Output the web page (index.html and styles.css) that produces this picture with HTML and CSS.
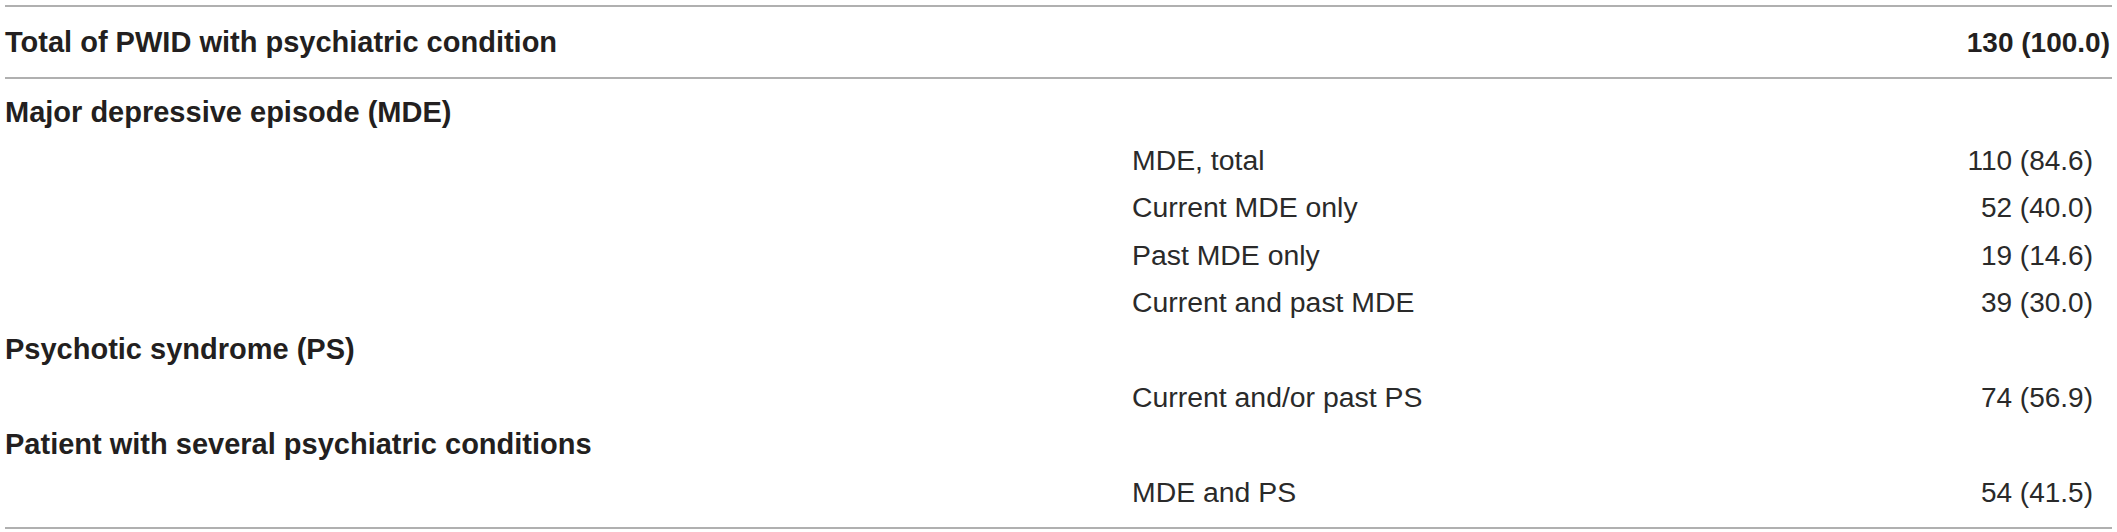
FILE: index.html
```html
<!DOCTYPE html>
<html lang="en">
<head>
<meta charset="utf-8">
<title>PWID with psychiatric condition</title>
<link rel="stylesheet" href="styles.css">
</head>
<body>
<table class="tbl">
  <colgroup>
    <col class="c-label">
    <col class="c-sub">
    <col class="c-num">
  </colgroup>
  <thead>
    <tr class="hdr">
      <th class="lbl" colspan="2">Total of PWID with psychiatric condition</th>
      <th class="num">130 (100.0)</th>
    </tr>
  </thead>
  <tbody>
    <tr class="first">
      <td class="sec">Major depressive episode (MDE)</td><td></td><td></td>
    </tr>
    <tr><td></td><td class="sub">MDE, total</td><td class="val">110 (84.6)</td></tr>
    <tr><td></td><td class="sub">Current MDE only</td><td class="val">52 (40.0)</td></tr>
    <tr><td></td><td class="sub">Past MDE only</td><td class="val">19 (14.6)</td></tr>
    <tr><td></td><td class="sub">Current and past MDE</td><td class="val">39 (30.0)</td></tr>
    <tr><td class="sec">Psychotic syndrome (PS)</td><td></td><td></td></tr>
    <tr><td></td><td class="sub">Current and/or past PS</td><td class="val">74 (56.9)</td></tr>
    <tr><td class="sec">Patient with several psychiatric conditions</td><td></td><td></td></tr>
    <tr class="last"><td></td><td class="sub">MDE and PS</td><td class="val">54 (41.5)</td></tr>
  </tbody>
</table>
</body>
</html>
```

FILE: styles.css
```css
html, body {
  margin: 0;
  padding: 0;
  background: #ffffff;
}

.tbl {
  margin: 5px 0 0 5px;
  width: 2107px;
  border-collapse: separate;
  border-spacing: 0;
  table-layout: fixed;
  font-family: "Liberation Sans", Arial, sans-serif;
  font-size: 28px;
  color: #231f20;
}

.c-label { width: 1127px; }
.c-sub { width: 660px; }
.c-num { width: 320px; }

.tbl th,
.tbl td {
  padding: 0;
  line-height: 47.4px;
  white-space: nowrap;
  vertical-align: top;
}

.hdr th {
  padding: 12px 0 11px 0;
  border-top: 2px solid #b0b0b0;
  border-bottom: 2px solid #b0b0b0;
  font-weight: 700;
}

.hdr .lbl {
  text-align: left;
  font-size: 29px;
}
.hdr .num {
  text-align: right;
  padding-right: 2px;
}

.sec {
  font-weight: 700;
  font-size: 29px;
  text-align: left;
}

.sub {
  font-weight: 400;
  font-size: 28.4px;
  text-align: left;
  color: #2a2a2a;
}

.val {
  font-weight: 400;
  text-align: right;
  padding-right: 19px !important;
  color: #2a2a2a;
}

.first td { padding-top: 10px; }
.last td {
  padding-bottom: 10.6px;
  border-bottom: 2px solid #b0b0b0;
}
```
